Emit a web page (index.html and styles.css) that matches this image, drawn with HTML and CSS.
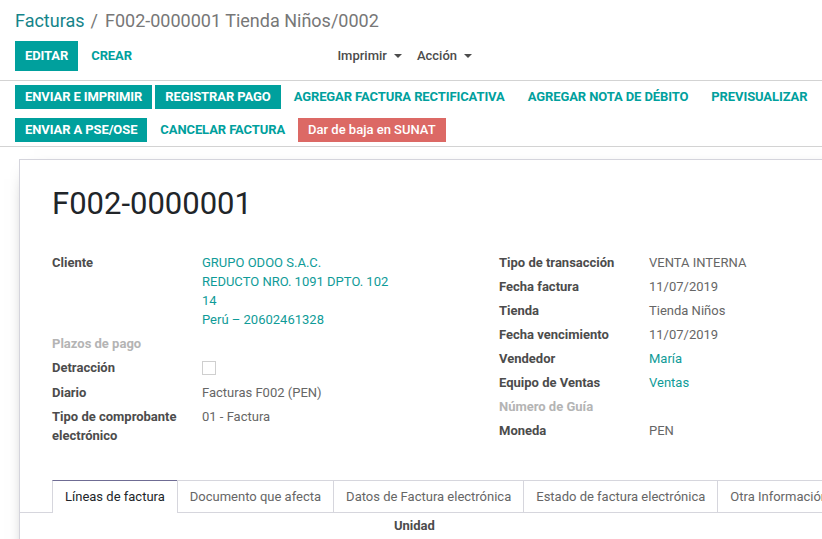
FILE: index.html
```html
<!DOCTYPE html>
<html lang="es">
<head>
<meta charset="utf-8">
<title>F002-0000001 Tienda Niños/0002</title>
<link rel="stylesheet" href="styles.css">
</head>
<body>
<div class="cp">
  <ol class="breadcrumb">
    <li><a class="bc-link">Facturas</a></li>
    <li class="bc-sep">/</li>
    <li class="bc-active">F002-0000001 Tienda Niños/0002</li>
  </ol>
  <div class="cp-row">
    <div class="cp-left">
      <div class="cp-buttons">
        <button class="btn btn-primary btn-lg">EDITAR</button>
        <button class="btn btn-link btn-lg">CREAR</button>
      </div>
      <div class="cp-sidebar">
        <span class="dd">Imprimir<i class="caret"></i></span>
        <span class="dd">Acción<i class="caret"></i></span>
      </div>
    </div>
  </div>
</div>

<div class="statusbar">
  <div class="sb-row">
    <button class="btn btn-primary">ENVIAR E IMPRIMIR</button>
    <button class="btn btn-primary">REGISTRAR PAGO</button>
    <button class="btn btn-link">AGREGAR FACTURA RECTIFICATIVA</button>
    <button class="btn btn-link">AGREGAR NOTA DE DÉBITO</button>
    <button class="btn btn-link">PREVISUALIZAR</button>
  </div>
  <div class="sb-row">
    <button class="btn btn-primary">ENVIAR A PSE/OSE</button>
    <button class="btn btn-link">CANCELAR FACTURA</button>
    <button class="btn btn-danger">Dar de baja en SUNAT</button>
  </div>
</div>

<div class="sheet-bg">
  <div class="sheet">
    <h1 class="title">F002-0000001</h1>
    <div class="groups">
      <div class="group">
        <div class="row">
          <div class="label">Cliente</div>
          <div class="value link">GRUPO ODOO S.A.C.<br>REDUCTO NRO. 1091 DPTO. 102<br>14<br>Perú – 20602461328</div>
        </div>
        <div class="row">
          <div class="label muted">Plazos de pago</div>
          <div class="value"></div>
        </div>
        <div class="row row-check">
          <div class="label">Detracción</div>
          <div class="value"><span class="checkbox"></span></div>
        </div>
        <div class="row">
          <div class="label">Diario</div>
          <div class="value">Facturas F002 (PEN)</div>
        </div>
        <div class="row">
          <div class="label">Tipo de comprobante electrónico</div>
          <div class="value">01 - Factura</div>
        </div>
      </div>
      <div class="group">
        <div class="row">
          <div class="label">Tipo de transacción</div>
          <div class="value">VENTA INTERNA</div>
        </div>
        <div class="row">
          <div class="label">Fecha factura</div>
          <div class="value">11/07/2019</div>
        </div>
        <div class="row">
          <div class="label">Tienda</div>
          <div class="value">Tienda Niños</div>
        </div>
        <div class="row">
          <div class="label">Fecha vencimiento</div>
          <div class="value">11/07/2019</div>
        </div>
        <div class="row">
          <div class="label">Vendedor</div>
          <div class="value link">María</div>
        </div>
        <div class="row">
          <div class="label">Equipo de Ventas</div>
          <div class="value link">Ventas</div>
        </div>
        <div class="row">
          <div class="label muted">Número de Guía</div>
          <div class="value"></div>
        </div>
        <div class="row">
          <div class="label">Moneda</div>
          <div class="value">PEN</div>
        </div>
      </div>
    </div>

    <div class="notebook">
      <ul class="tabs">
        <li class="tab active">Líneas de factura</li>
        <li class="tab">Documento que afecta</li>
        <li class="tab">Datos de Factura electrónica</li>
        <li class="tab">Estado de factura electrónica</li>
        <li class="tab">Otra Información</li>
      </ul>
      <div class="tab-content">
        <div class="thead">
          <div class="th"></div>
          <div class="th">Unidad</div>
        </div>
      </div>
    </div>
  </div>
</div>
</body>
</html>
```

FILE: styles.css
```css
html, body {
  margin: 0;
  padding: 0;
  overflow: hidden;
  background: #ffffff;
}

body {
  font-family: Roboto, "Noto Sans", "Liberation Sans", sans-serif;
  font-size: 13px;
  color: #4c4c4c;
  width: 822px;
  height: 539px;
}

/* ---------- control panel ---------- */
.cp {
  padding: 8px 15px 0 15px;
  border-bottom: 1px solid #d3d3d3;
  height: 72px;
}

.breadcrumb {
  list-style: none;
  margin: 0;
  padding: 0;
  display: flex;
  font-size: 18px;
  line-height: 25px;
  height: 25px;
}

.bc-link {
  color: #15848a;
}

.bc-sep {
  color: #777;
  padding: 0 7px 0 6px;
}

.bc-active {
  color: #777;
}

.cp-row {
  margin-top: 7px;
}

.cp-left {
  width: 464px;
  display: flex;
  align-items: center;
}

.cp-buttons {
  display: flex;
}

.cp-sidebar {
  margin-left: auto;
  display: flex;
}

.dd {
  font-weight: 500;
  color: #4c4c4c;
  padding: 1px 7px 0 8px;
  line-height: 30px;
  display: flex;
  align-items: center;
}

.caret {
  display: inline-block;
  width: 0;
  height: 0;
  margin-left: 7px;
  border-left: 4px solid transparent;
  border-right: 4px solid transparent;
  border-top: 4px solid #4c4c4c;
}

/* ---------- buttons ---------- */
.btn {
  font-family: inherit;
  font-size: 13px;
  font-weight: 700;
  letter-spacing: -0.1px;
  border: 0;
  border-radius: 0;
  height: 24px;
  line-height: 24px;
  padding: 0 10px;
  margin: 0 3px 0 0;
  cursor: pointer;
  white-space: nowrap;
}

.btn-lg {
  height: 30px;
  line-height: 30px;
  padding: 0 10px;
}

.btn-primary {
  background: #00a09d;
  color: #ffffff;
}

.btn-link {
  background: transparent;
  color: #00a09d;
}

.btn-danger {
  background: #dc6965;
  color: #ffffff;
  font-weight: 500;
  letter-spacing: 0;
}

/* ---------- status bar ---------- */
.statusbar {
  padding: 4px 15px 4px 15px;
  border-bottom: 1px solid #d3d3d3;
  display: flex;
  flex-direction: column;
  gap: 9px;
}

.sb-row {
  display: flex;
}

/* ---------- sheet ---------- */
.sheet-bg {
  padding: 12px 0 0 19px;
}

.sheet {
  width: 1000px;
  min-height: 500px;
  border: 1px solid #d4d4dc;
  box-shadow: 0 5px 20px -15px #000;
  background: #fff;
  padding: 25px 32px 0 32px;
  box-sizing: border-box;
}

.title {
  margin: 0;
  font-size: 31px;
  font-weight: 400;
  line-height: 37px;
  color: #212529;
}

.groups {
  margin-top: 31px;
  display: grid;
  grid-template-columns: 447px 300px;
}

.group {
  display: flex;
  flex-direction: column;
}

.row {
  display: grid;
  grid-template-columns: 150px 1fr;
  line-height: 19px;
  padding-bottom: 5px;
}

.row-check {
  padding-bottom: 6px;
}

.label {
  font-weight: 700;
  color: #4c4c4c;
  padding-right: 10px;
}

.label.muted {
  color: #b4b4b4;
}

.value {
  color: #666666;
}

.value.link {
  color: #0f9b98;
}

.checkbox {
  display: block;
  width: 12px;
  height: 12px;
  margin-top: 3px;
  border: 1px solid #cfcfcf;
  background: #fff;
}

/* ---------- notebook ---------- */
.notebook {
  margin: 30px -32px 0 -32px;
}

.tabs {
  list-style: none;
  margin: 0;
  padding: 0 0 0 32px;
  display: flex;
  border-bottom: 1px solid #d6d6dd;
}

.tab {
  padding: 6px 12px;
  line-height: 19px;
  color: #666666;
  border: 1px solid #d6d6dd;
  border-right: 0;
  border-bottom: 0;
  white-space: nowrap;
}

.tab:last-child {
  border-right: 1px solid #d6d6dd;
}

.tab.active {
  color: #212529;
  border-top-color: #6f6c94;
  background: #fff;
  margin-bottom: -1px;
  padding-bottom: 7px;
}

.tab-content {
  padding: 3px 32px 0 32px;
}

.thead {
  display: grid;
  grid-template-columns: 342px auto;
  line-height: 19px;
}

.th {
  font-weight: 700;
  color: #4c4c4c;
}
```
